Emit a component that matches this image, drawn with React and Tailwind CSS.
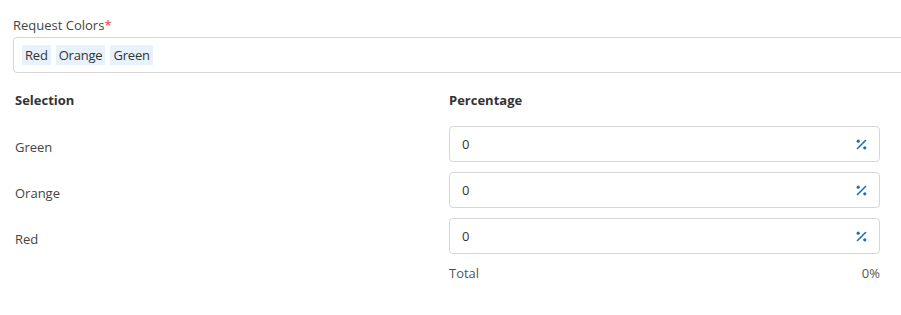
import React from "react";

function PercentIcon() {
  return (
    <svg width="11" height="11" viewBox="0 0 11 11" className="text-[#1f6fb0]">
      <circle cx="2.2" cy="2.2" r="1.6" fill="currentColor" />
      <circle cx="8.8" cy="8.8" r="1.6" fill="currentColor" />
      <path d="M9.5 1.5 L1.5 9.5" stroke="currentColor" strokeWidth="1.6" strokeLinecap="round" />
    </svg>
  );
}

function PercentInput({ value }) {
  return (
    <div className="flex items-center justify-between h-[36px] border border-[#d4d7da] rounded-[4px] pl-[12px] pr-[12px] bg-white">
      <span className="text-[13px] text-[#333] pt-[2px]">{value}</span>
      <PercentIcon />
    </div>
  );
}

export default function App() {
  const colors = ["Red", "Orange", "Green"];
  const rows = ["Green", "Orange", "Red"];

  return (
    <div className="w-[901px] h-[315px] overflow-hidden bg-white font-['Open_Sans',sans-serif] text-[13px] text-[#444]">
      <div className="pl-[13px] pt-[16px]">
        <div className="leading-[18px] text-[#444]">
          Request Colors<span className="text-[#e53935]">*</span>
        </div>
        <div className="mt-[3px] w-[920px] h-[36px] border border-[#d4d7da] rounded-[4px] flex items-center gap-[5px] pl-[8px]">
          {colors.map((c) => (
            <span key={c} className="bg-[#e8f2fd] text-[#333] px-[3px] h-[20px] leading-[20px] tracking-[-0.2px]">
              {c}
            </span>
          ))}
        </div>
      </div>

      <div className="pl-[15px] grid grid-cols-[434px_431px] mt-[18px]">
        <div className="font-bold text-[#333] leading-[18px]">Selection</div>
        <div className="font-bold text-[#333] leading-[18px]">Percentage</div>
      </div>

      <div className="pl-[15px] mt-[17px] flex flex-col gap-[10px]">
        {rows.map((r) => (
          <div key={r} className="grid grid-cols-[434px_431px] items-start">
            <div className="text-[#444] pt-[12px] leading-[18px]">{r}</div>
            <PercentInput value="0" />
          </div>
        ))}
        <div className="grid grid-cols-[434px_431px]">
          <div></div>
          <div className="flex justify-between text-[#555] leading-[18px]">
            <span>Total</span>
            <span>0%</span>
          </div>
        </div>
      </div>
    </div>
  );
}
